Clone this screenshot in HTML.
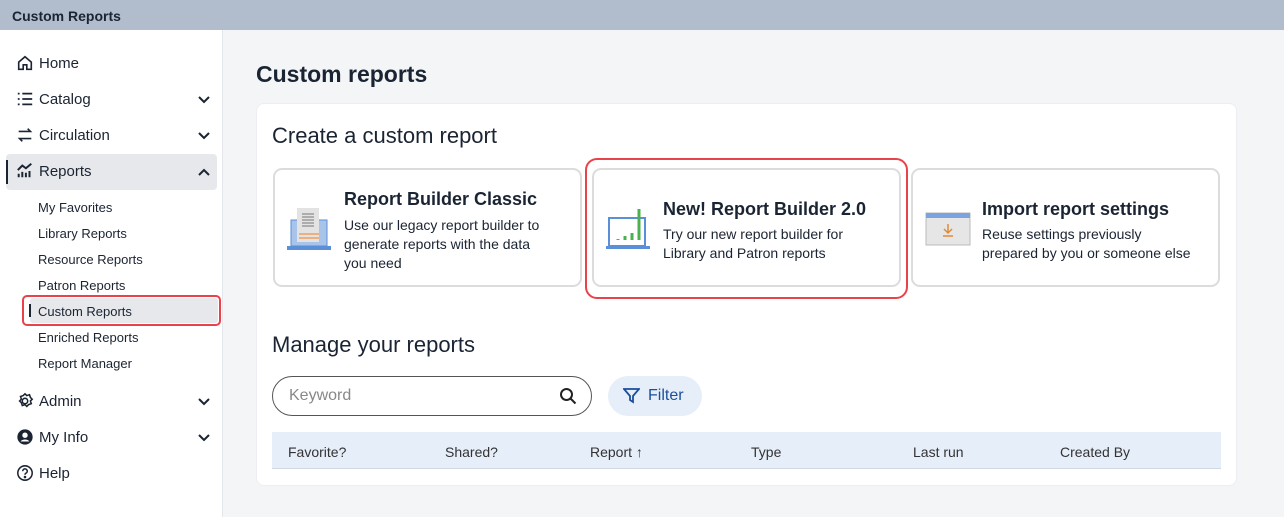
<!DOCTYPE html>
<html><head><meta charset="utf-8"><style>
*{box-sizing:border-box;margin:0;padding:0}
body{width:1284px;height:517px;overflow:hidden;font-family:"Liberation Sans",sans-serif;background:#f4f5f7;color:#1b2432;position:relative}
.top{position:absolute;left:0;top:0;width:1284px;height:30px;background:#b1bccc;font-size:14px;font-weight:bold;padding:8px 12px;color:#1b2432}
.side{position:absolute;left:0;top:30px;width:223px;height:487px;background:#fff;border-right:1px solid #e3e6ea}
.nav{position:absolute;left:16px;font-size:15px;display:flex;align-items:center;gap:5px}
.nav svg{width:18px;height:18px}
.chev{position:absolute;left:197px;width:14px;height:14px}
.sub{position:absolute;left:38px;font-size:13px}
.main{position:absolute;left:256px;top:103px;width:981px;height:383px;background:#fff;border-radius:8px;border:1px solid #eceef1}
h1{position:absolute;left:256px;top:61px;font-size:23px;font-weight:bold}
.card{position:absolute;top:168px;width:309px;height:119px;border:2px solid #dcdcdc;border-radius:9px;background:#fff}
.card b{position:absolute;font-size:18px}
.card p{position:absolute;font-size:14px;line-height:19px}
.th{position:absolute;top:444px;font-size:14px;color:#333}
</style></head><body>
<div class="top">Custom Reports</div>
<div class="side">
<div class="nav" style="top:24px"><svg viewBox="0 0 20 20" fill="none" stroke="#1b2432" stroke-width="1.8"><path d="M3 9L10 3l7 6v8H12v-5H8v5H3z"/></svg>Home</div>
<div class="nav" style="top:60px"><svg viewBox="0 0 20 20" stroke="#1b2432" stroke-width="2"><path d="M2 4h2M2 10h2M2 16h2M7 4h11M7 10h11M7 16h11"/></svg>Catalog</div>
<svg class="chev" style="top:63px" viewBox="0 0 14 14" fill="none" stroke="#1b2432" stroke-width="2"><path d="M2 4l5 5 5-5"/></svg>
<div class="nav" style="top:96px"><svg viewBox="0 0 20 20" fill="none" stroke="#1b2432" stroke-width="1.8"><path d="M3 6h13l-3-3M17 14H4l3 3"/></svg>Circulation</div>
<svg class="chev" style="top:99px" viewBox="0 0 14 14" fill="none" stroke="#1b2432" stroke-width="2"><path d="M2 4l5 5 5-5"/></svg>
<div style="position:absolute;left:6px;top:124px;width:211px;height:36px;background:#e6e8ec;border-radius:4px"></div>
<div style="position:absolute;left:6px;top:130px;width:2px;height:24px;background:#1b2432"></div>
<div class="nav" style="top:132px"><svg viewBox="0 0 20 20" stroke="#1b2432" stroke-width="2.2" fill="none"><path d="M3 17v-4M7 17v-6M11 17v-5M15 17v-7M2 9l5-5 4 3 6-5"/></svg>Reports</div>
<svg class="chev" style="top:135px" viewBox="0 0 14 14" fill="none" stroke="#1b2432" stroke-width="2"><path d="M2 10l5-5 5 5"/></svg>
<div class="sub" style="top:170px">My Favorites</div>
<div class="sub" style="top:196px">Library Reports</div>
<div class="sub" style="top:222px">Resource Reports</div>
<div class="sub" style="top:248px">Patron Reports</div>
<div style="position:absolute;left:22px;top:265px;width:199px;height:31px;border:2px solid #e8424a;border-radius:5px"></div>
<div style="position:absolute;left:30px;top:268px;width:188px;height:25px;background:#e6e8ec;border-radius:3px"></div>
<div style="position:absolute;left:29px;top:274px;width:2px;height:13px;background:#1b2432"></div>
<div class="sub" style="top:274px">Custom Reports</div>
<div class="sub" style="top:300px">Enriched Reports</div>
<div class="sub" style="top:326px">Report Manager</div>
<div class="nav" style="top:362px"><svg viewBox="0 0 20 20" fill="none" stroke="#1b2432" stroke-width="1.7"><circle cx="10" cy="10" r="3"/><path d="M10 2l2 2 3-1 1 3 2 2-2 2 1 3-3 1-2 2-2-2-3 1-1-3-2-2 2-2-1-3 3-1z"/></svg>Admin</div>
<svg class="chev" style="top:365px" viewBox="0 0 14 14" fill="none" stroke="#1b2432" stroke-width="2"><path d="M2 4l5 5 5-5"/></svg>
<div class="nav" style="top:398px"><svg viewBox="0 0 20 20"><circle cx="10" cy="10" r="8.5" fill="#1b2432"/><circle cx="10" cy="8" r="3" fill="#fff"/><path d="M5 15c2-3 8-3 10 0" fill="#fff"/></svg>My Info</div>
<svg class="chev" style="top:401px" viewBox="0 0 14 14" fill="none" stroke="#1b2432" stroke-width="2"><path d="M2 4l5 5 5-5"/></svg>
<div class="nav" style="top:434px"><svg viewBox="0 0 20 20" fill="none" stroke="#1b2432" stroke-width="1.7"><circle cx="10" cy="10" r="8"/><path d="M7.5 8a2.5 2.5 0 1 1 3.5 2.2c-.8.4-1 1-1 1.8"/><circle cx="10" cy="14.5" r=".6" fill="#1b2432"/></svg>Help</div>
</div>
<h1>Custom reports</h1>
<div class="main"></div>
<div style="position:absolute;left:272px;top:123px;font-size:22px">Create a custom report</div>
<div class="card" style="left:273px"><svg style="position:absolute;left:12px;top:36px" width="46" height="46" viewBox="0 0 46 46"><rect x="4" y="14" width="36" height="26" fill="#a8c4ea" stroke="#5b8fd8"/><rect x="10" y="2" width="22" height="34" fill="#e3e3e3"/><path d="M15 8h12M15 11h12M15 14h12M15 17h12M15 20h12" stroke="#777"/><path d="M12 28h20M12 32h20" stroke="#f0a060" stroke-width="1.5"/><rect x="0" y="40" width="44" height="4" fill="#5b8fd8"/></svg><b style="left:69px;top:19px">Report Builder Classic</b><p style="left:69px;top:46px">Use our legacy report builder to<br>generate reports with the data<br>you need</p></div>
<div style="position:absolute;left:585px;top:158px;width:323px;height:141px;border:2px solid #e8424a;border-radius:12px"></div>
<div class="card" style="left:592px"><svg style="position:absolute;left:12px;top:36px" width="46" height="46" viewBox="0 0 46 46"><rect x="3" y="12" width="36" height="28" fill="#fff" stroke="#5b8fd8" stroke-width="2"/><path d="M12 34v-1M19 34v-4M26 34v-7M33 34V3" stroke="#4caf50" stroke-width="3"/><rect x="0" y="40" width="44" height="3" fill="#5b8fd8"/></svg><b style="left:69px;top:29px">New! Report Builder 2.0</b><p style="left:69px;top:55px">Try our new report builder for<br>Library and Patron reports</p></div>
<div class="card" style="left:911px"><svg style="position:absolute;left:12px;top:42px" width="46" height="36" viewBox="0 0 46 36"><rect x="1" y="1" width="44" height="32" fill="#e6e6e6" stroke="#bbb"/><rect x="1" y="1" width="44" height="5" fill="#7aa3e0"/><path d="M23 12v9M19 17l4 4 4-4M18 24h10" stroke="#e08a3a" stroke-width="1.5" fill="none"/></svg><b style="left:69px;top:29px">Import report settings</b><p style="left:69px;top:55px">Reuse settings previously<br>prepared by you or someone else</p></div>
<div style="position:absolute;left:272px;top:332px;font-size:22px">Manage your reports</div>
<div style="position:absolute;left:272px;top:376px;width:320px;height:40px;border:1px solid #555;border-radius:20px;font-size:16px;color:#888;padding:10px 16px">Keyword</div>
<svg style="position:absolute;left:559px;top:387px" width="18" height="18" viewBox="0 0 18 18" fill="none" stroke="#222" stroke-width="2"><circle cx="7.5" cy="7.5" r="5.5"/><path d="M11.5 11.5l5 5"/></svg>
<div style="position:absolute;left:608px;top:376px;width:94px;height:40px;background:#e6eef9;border-radius:20px;font-size:16px;color:#1a4f9c;padding:11px 0 0 40px">Filter</div>
<svg style="position:absolute;left:623px;top:388px" width="17" height="16" viewBox="0 0 17 16" fill="none" stroke="#1a4f9c" stroke-width="1.8"><path d="M1 1h15l-6 7v6l-3-2V8z"/></svg>
<div style="position:absolute;left:272px;top:432px;width:949px;height:37px;background:#e6eef9;border-bottom:1px solid #d0d8e4"></div>
<div class="th" style="left:288px">Favorite?</div><div class="th" style="left:445px">Shared?</div><div class="th" style="left:590px">Report &#8593;</div><div class="th" style="left:751px">Type</div><div class="th" style="left:913px">Last run</div><div class="th" style="left:1060px">Created By</div>
</body></html>
